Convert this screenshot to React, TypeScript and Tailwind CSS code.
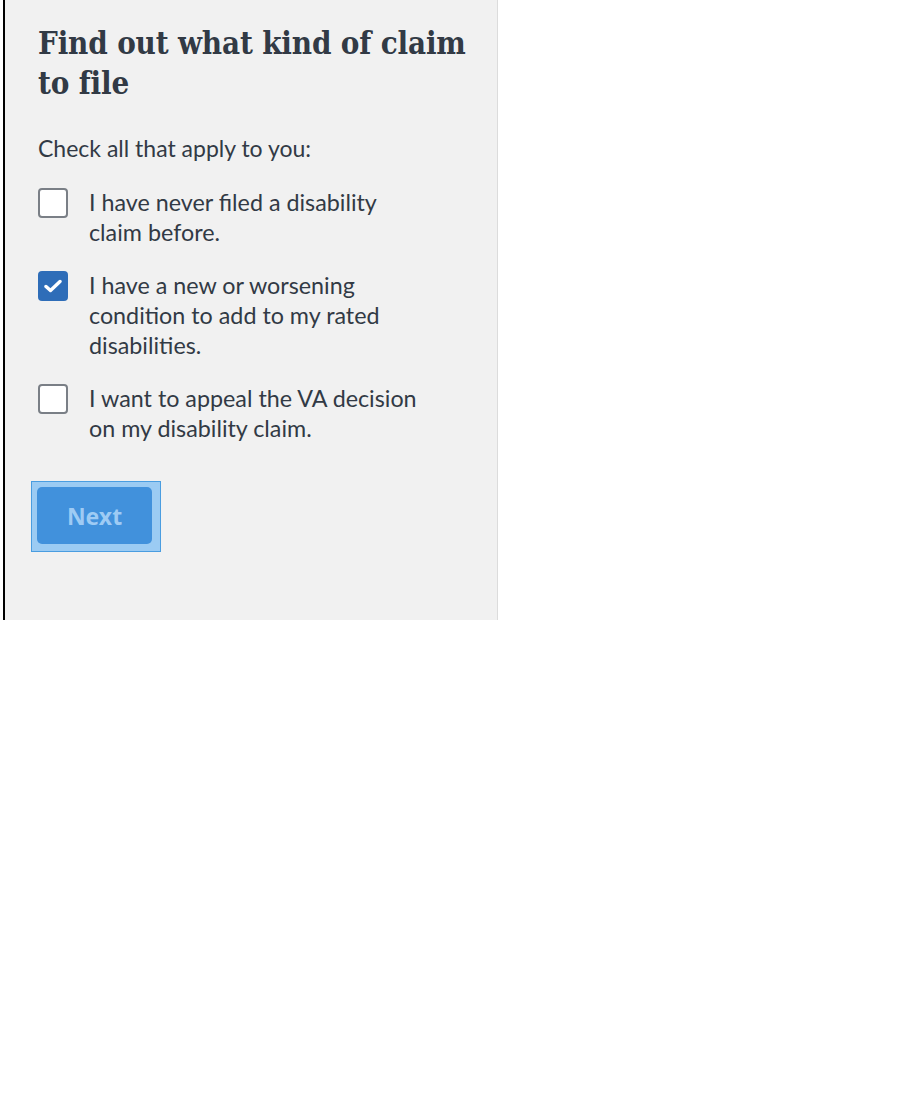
import React, { useState } from "react";

const options = [
  "I have never filed a disability claim before.",
  "I have a new or worsening condition to add to my rated disabilities.",
  "I want to appeal the VA decision on my disability claim.",
];

const Check = ({ checked }: { checked: boolean }) =>
  checked ? (
    <span className="flex h-[30px] w-[30px] shrink-0 items-center justify-center rounded-[4px] bg-[#2e6db8]">
      <svg width="18" height="14" viewBox="0 0 18 14" fill="none">
        <path d="M2 7.5 L6.5 11.5 L16 2.5" stroke="white" strokeWidth="3.4" strokeLinecap="round" strokeLinejoin="round" />
      </svg>
    </span>
  ) : (
    <span className="h-[30px] w-[30px] shrink-0 rounded-[4px] border-2 border-[#7a7f86] bg-white" />
  );

export default function App() {
  const [checked, setChecked] = useState([false, true, false]);

  return (
    <div className="min-h-[1106px] bg-white">
      <div className="ml-[3px] h-[620px] w-[495px] border-l-2 border-r border-l-black border-r-[#dcdcdc] bg-[#f1f1f1] pt-[3px]">
        <div className="pl-[33px] pr-[20px] pt-[20px] text-[#323a45]" style={{ fontFamily: "Lato, 'Noto Sans', sans-serif" }}>
          <h1
            className="text-[31px] font-bold leading-[40px] tracking-[-0.15px] [font-stretch:condensed]"
            style={{ fontFamily: "'DejaVu Serif', 'Liberation Serif', serif" }}
          >
            Find out what kind of claim to file
          </h1>
          <p className="mt-[30px] text-[23px] leading-[30px]">Check all that apply to you:</p>
          <div className="mt-[25px] flex flex-col gap-[24px]">
            {options.map((label, i) => (
              <label
                key={i}
                className="flex cursor-pointer items-start gap-[21px]"
                onClick={() => setChecked((c) => c.map((v, j) => (j === i ? !v : v)))}
              >
                <Check checked={checked[i]} />
                <span className="-mt-[1px] w-[335px] text-[23.3px] leading-[30px]">{label}</span>
              </label>
            ))}
          </div>
          <div className="-ml-[7px] mt-[38px] inline-block border border-[#4a9de0] bg-[#9bcbf3] pb-[7px] pl-[5px] pr-[8px] pt-[5px]">
            <button
              className="h-[57px] w-[115px] rounded-[5px] bg-[#4191dc] pt-[2px] text-[23px] font-bold text-[#9ecbf4]"
              style={{ fontFamily: "'Noto Sans', 'Open Sans', sans-serif" }}
            >
              Next
            </button>
          </div>
        </div>
      </div>
    </div>
  );
}
